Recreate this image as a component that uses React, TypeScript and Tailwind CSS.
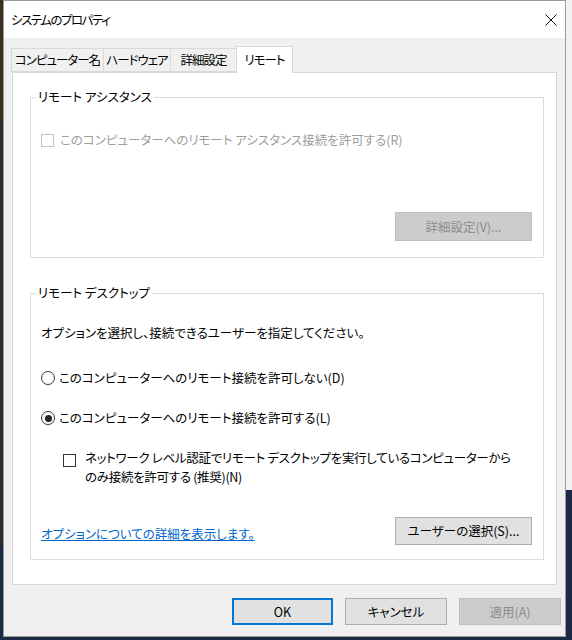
function CheckBox({ disabled = false }: { disabled?: boolean }) {
  return (
    <span
      className={`inline-block w-[13px] h-[13px] shrink-0 border bg-white ${
        disabled ? "border-[#c4c4c4]" : "border-[#333333]"
      }`}
    />
  );
}

function Radio({ checked = false }: { checked?: boolean }) {
  return (
    <span className="flex items-center justify-center w-[14px] h-[14px] shrink-0 rounded-full border border-[#333333] bg-white">
      {checked && <span className="w-[7px] h-[7px] rounded-full bg-[#222222]" />}
    </span>
  );
}

function Button({ label, disabled = false, primary = false, className = "" }: { label: string; disabled?: boolean; primary?: boolean; className?: string }) {
  const tone = disabled
    ? "bg-[#cccccc] border border-[#bfbfbf] text-[#8d8d8d]"
    : primary
    ? "bg-[#e1e1e1] border-2 border-[#0078d7] text-black"
    : "bg-[#e1e1e1] border border-[#adadad] text-black";
  return <div className={`flex items-center justify-center ${tone} ${className}`}>{label}</div>;
}

const tabs = ["コンピューター名", "ハードウェア", "詳細設定"];
const tabWidths = ["w-[93px]", "w-[68px]", "w-[67px]"];

export default function App() {
  return (
    <div className="w-[572px] h-[640px] flex flex-col overflow-hidden bg-[#1c2b45] font-['Noto_Sans_CJK_JP','Noto_Sans',sans-serif] [font-feature-settings:'palt'] text-[12.5px] leading-[16px] text-black">
      <div className="flex h-[637px]">
        {/* desktop edge left */}
        <div className="w-[3px] flex flex-col">
          <div className="h-[120px] bg-[#3a3020]" />
          <div className="flex-1 bg-[#2c2c2c]" />
          <div className="h-[90px] bg-[#1c2b45]" />
        </div>

        {/* window */}
        <div className="w-[563px] flex flex-col border border-[#9a9a9a] bg-[#f0f0f0]">
          {/* title bar */}
          <div className="h-[37px] bg-white flex items-center justify-between pl-[7px] pr-[8px]">
            <span className="text-[12.5px] tracking-[-1.5px]">システムのプロパティ</span>
            <svg width="12" height="12" viewBox="0 0 12 12">
              <path d="M0.5 0.5 L11.5 11.5 M11.5 0.5 L0.5 11.5" stroke="#111" strokeWidth="1" fill="none" />
            </svg>
          </div>

          <div className="flex-1 flex flex-col px-[8px] pt-[8px]">
            {/* tabs */}
            <div className="flex items-end h-[26px] relative z-10 -ml-px">
              {tabs.map((t, i) => (
                <div
                  key={t}
                  className={`${tabWidths[i]} h-[24px] flex items-center justify-center border border-[#d9d9d9] bg-[#f0f0f0] tracking-[-1px] ${i > 0 ? "-ml-px" : ""}`}
                >
                  {t}
                </div>
              ))}
              <div className="w-[57px] h-[27px] -ml-px -mb-px flex items-center justify-center border border-b-0 border-[#d9d9d9] bg-white tracking-[-1px]">
                リモート
              </div>
            </div>

            {/* panel */}
            <div className="h-[513px] bg-white border border-[#d9d9d9] pl-[17px] pr-[12px] pt-[16px]">
              <fieldset className="border border-[#dcdcdc] pl-[10px] pr-[11px] pt-[27px] pb-[16px]">
                <legend className="-ml-[5px] px-[2px] leading-[16px]">リモート アシスタンス</legend>
                <div className="flex items-center gap-[6px] h-[16px] text-[#9d9d9d]">
                  <CheckBox disabled />
                  <span>このコンピューターへのリモート アシスタンス接続を許可する(R)</span>
                </div>
                <div className="flex justify-end mt-[64px]">
                  <Button label="詳細設定(V)..." disabled className="w-[137px] h-[29px]" />
                </div>
              </fieldset>

              <fieldset className="mt-[27px] border border-[#dcdcdc] pl-[10px] pr-[11px] pt-[24px] pb-[14px]">
                <legend className="-ml-[5px] px-[2px] leading-[16px]">リモート デスクトップ</legend>
                <div className="h-[16px] flex items-center">オプションを選択し、接続できるユーザーを指定してください。</div>
                <div className="mt-[29px] h-[16px] flex items-center gap-[4px]">
                  <Radio />
                  <span>このコンピューターへのリモート接続を許可しない(D)</span>
                </div>
                <div className="mt-[24px] h-[16px] flex items-center gap-[4px]">
                  <Radio checked />
                  <span>このコンピューターへのリモート接続を許可する(L)</span>
                </div>
                <div className="mt-[22px] ml-[22px] flex gap-[9px] leading-[19px]">
                  <div className="pt-[4px]">
                    <CheckBox />
                  </div>
                  <div className="tracking-[-0.3px]">
                    <div>ネットワーク レベル認証でリモート デスクトップを実行しているコンピューターから</div>
                    <div>のみ接続を許可する (推奨)(N)</div>
                  </div>
                </div>
                <div className="mt-[31px] flex items-end justify-between">
                  <a className="text-[#0066cc] underline underline-offset-1 mb-[3px]">オプションについての詳細を表示します。</a>
                  <Button label="ユーザーの選択(S)..." className="w-[137px] h-[28px]" />
                </div>
              </fieldset>
            </div>

            {/* dialog buttons */}
            <div className="mt-[13px] -mr-[4px] flex justify-end gap-[12px]">
              <Button label="OK" primary className="w-[101px] h-[27px]" />
              <Button label="キャンセル" className="w-[102px] h-[27px]" />
              <Button label="適用(A)" disabled className="w-[102px] h-[27px]" />
            </div>
          </div>
        </div>

        {/* desktop edge right */}
        <div className="flex-1 flex flex-col">
          <div className="h-[490px] bg-[#f2f2f2]" />
          <div className="flex-1 bg-[#1c2b45]" />
        </div>
      </div>
    </div>
  );
}
